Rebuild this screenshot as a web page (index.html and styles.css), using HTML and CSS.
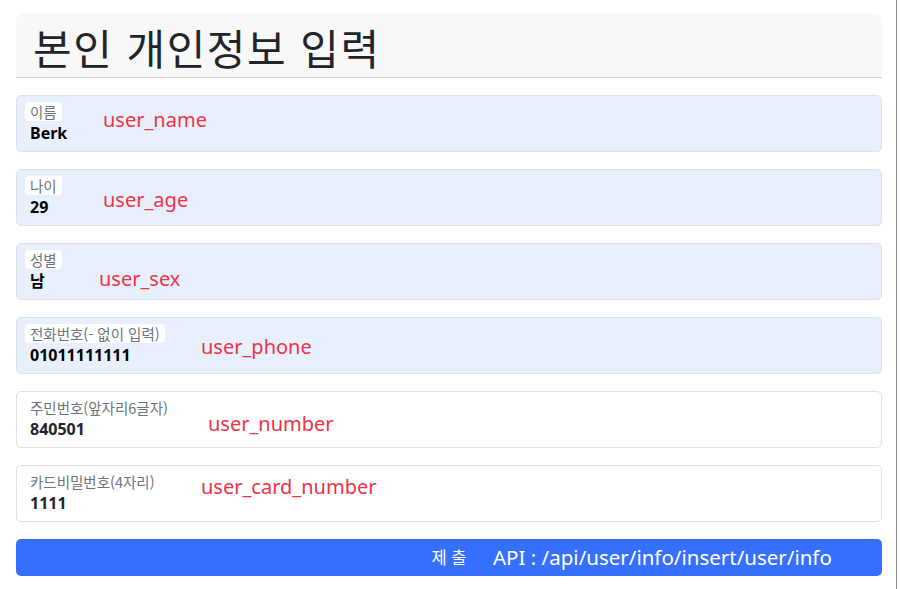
FILE: index.html
```html
<!DOCTYPE html>
<html lang="ko">
<head>
<meta charset="utf-8">
<title>본인 개인정보 입력</title>
<link rel="stylesheet" href="styles.css">
</head>
<body>
<div class="edge"></div>
<main class="page">
  <header class="head">
    <h1 class="title">본인 개인정보 입력</h1>
  </header>
  <form class="form">
    <div class="field filled">
      <span class="label">이름</span>
      <span class="value">Berk</span>
      <span class="tag tag-name">user_name</span>
    </div>
    <div class="field filled">
      <span class="label">나이</span>
      <span class="value">29</span>
      <span class="tag tag-age">user_age</span>
    </div>
    <div class="field filled">
      <span class="label">성별</span>
      <span class="value">남</span>
      <span class="tag tag-sex">user_sex</span>
    </div>
    <div class="field filled">
      <span class="label">전화번호(- 없이 입력)</span>
      <span class="value">01011111111</span>
      <span class="tag tag-phone">user_phone</span>
    </div>
    <div class="field">
      <span class="label">주민번호(앞자리6글자)</span>
      <span class="value">840501</span>
      <span class="tag tag-number">user_number</span>
    </div>
    <div class="field">
      <span class="label">카드비밀번호(4자리)</span>
      <span class="value">1111</span>
      <span class="tag tag-card">user_card_number</span>
    </div>
    <button type="button" class="submit">제 출<span class="api">API : /api/user/info/insert/user/info</span></button>
  </form>
</main>
</body>
</html>
```
FILE: styles.css
```css
html, body {
  margin: 0;
  padding: 0;
  background: #ffffff;
}
body {
  font-family: "Noto Sans", "Noto Sans CJK KR", sans-serif;
  color: #212529;
  position: relative;
  height: 589px;
  overflow: hidden;
}
.edge {
  position: absolute;
  top: 0;
  right: 3px;
  width: 1px;
  height: 100%;
  background: #8a8a8a;
}
.page {
  width: 866px;
  padding: 14px 0 0 16px;
}
.head {
  height: 63px;
  background: #f8f8f8;
  border-bottom: 1px solid #cfcfcf;
  border-radius: 6px 6px 0 0;
  display: flex;
  align-items: center;
  padding-left: 17px;
  margin-bottom: 17px;
}
.title {
  margin: 0;
  font-family: "Noto Sans CJK KR", sans-serif;
  font-weight: 400;
  font-size: 42px;
  line-height: 48px;
  letter-spacing: 1.5px;
  color: #212529;
  position: relative;
  top: 1px;
}
.form {
  display: flex;
  flex-direction: column;
  gap: 17px;
}
.field {
  position: relative;
  height: 55px;
  box-sizing: content-box;
  border: 1px solid #dee2e6;
  border-radius: 5px;
  background: #ffffff;
  padding: 0 8px;
  display: flex;
  flex-direction: column;
  align-items: flex-start;
}
.field.filled {
  background: #e8f0fe;
}
.label {
  margin-top: 6px;
  font-family: "Noto Sans CJK KR", sans-serif;
  font-size: 14.5px;
  line-height: 19px;
  color: #6c757d;
  padding: 0 5px;
  border-radius: 4px;
}
.field.filled .label {
  background: #ffffff;
}
.value {
  margin-left: 5px;
  font-family: "Noto Sans", "Noto Sans CJK KR", sans-serif;
  font-weight: 700;
  font-size: 16px;
  line-height: 24px;
  color: #000000;
}
.field:not(.filled) .value {
  color: #212529;
}
.tag {
  position: absolute;
  font-family: "Noto Sans", "Noto Sans CJK KR", sans-serif;
  font-size: 20px;
  line-height: 24px;
  color: #ee3344;
  white-space: nowrap;
}
.tag-name { left: 86px; top: 12px; }
.tag-age { left: 86px; top: 18px; }
.tag-sex { left: 82px; top: 23px; }
.tag-phone { left: 184px; top: 17px; }
.tag-number { left: 191px; top: 20px; }
.tag-card { left: 184px; top: 9px; }
.submit {
  position: relative;
  height: 37px;
  border: none;
  border-radius: 5px;
  background: #3570ff;
  color: #ffffff;
  font-family: "Noto Sans CJK KR", sans-serif;
  font-size: 16.5px;
  line-height: 37px;
  padding: 0;
  text-align: center;
}
.api {
  position: absolute;
  left: 477px;
  top: 0;
  font-family: "Noto Sans", "Noto Sans CJK KR", sans-serif;
  font-size: 20.5px;
  line-height: 37px;
  white-space: nowrap;
}
```
